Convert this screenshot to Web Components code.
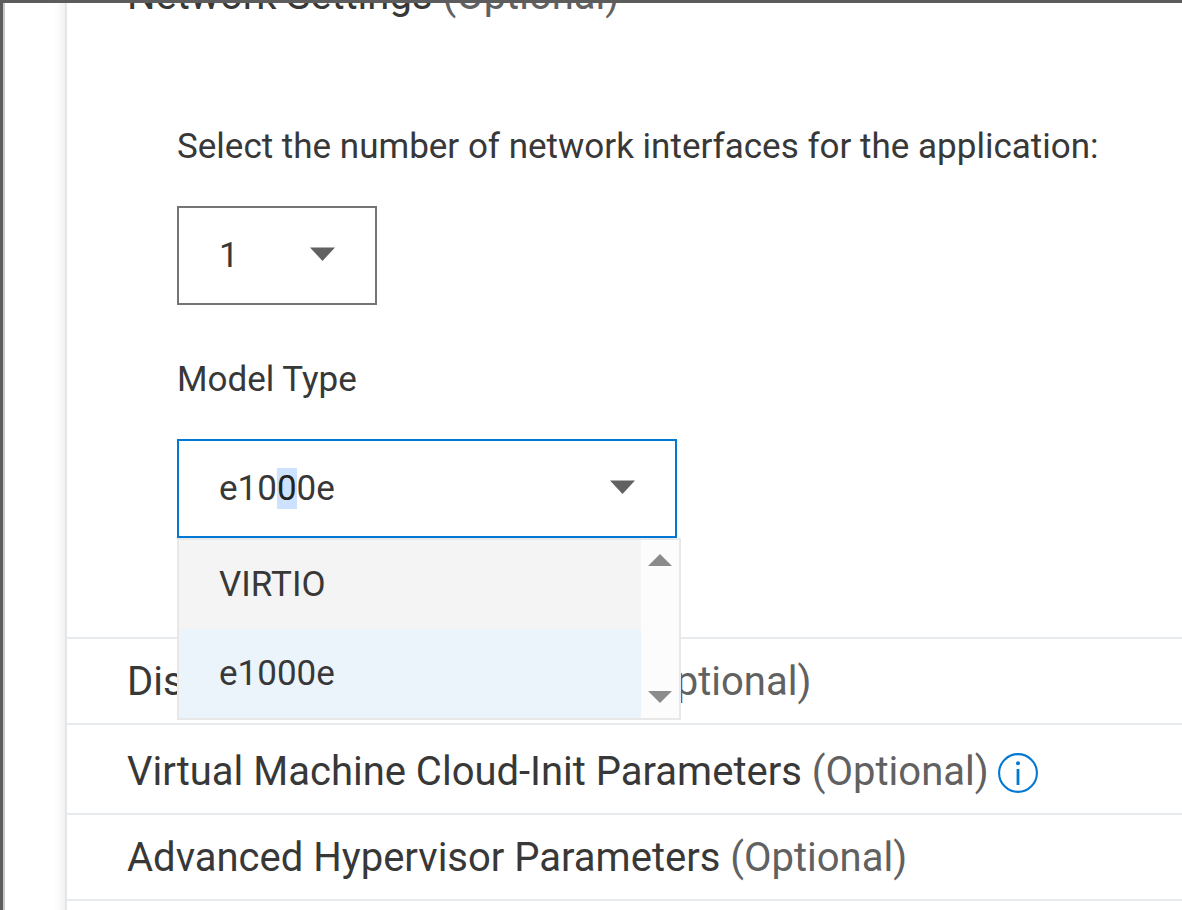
<!DOCTYPE html>
<html lang="en">
<head>
<meta charset="utf-8">
<title>Virtual machine configuration</title>
<style>
html, body { height: 100%; }
body { margin: 0; overflow: hidden; background: #fff; color: #383838; font-family: Roboto, "Liberation Sans", sans-serif; font-size: 35px; line-height: 48px; }
</style>
</head>
<body>
<app-frame>
  <settings-panel>
    <settings-section label="Network Settings" expanded>
      <form-field label="Select the number of network interfaces for the application:">
        <count-select></count-select>
      </form-field>
      <form-field label="Model Type">
        <model-combo></model-combo>
      </form-field>
    </settings-section>
    <settings-section label="Disk and Device Parameters"></settings-section>
    <settings-section label="Virtual Machine Cloud-Init Parameters" info><info-button slot="info"></info-button></settings-section>
    <settings-section label="Advanced Hypervisor Parameters"></settings-section>
  </settings-panel>
</app-frame>
<script>
const CARET = '<svg class="caret" width="25" height="14" viewBox="0 0 25 14" aria-hidden="true"><path d="M0 0.4H25L12.5 14Z" fill="#616161"/></svg>';

class Base extends HTMLElement {
  constructor() {
    super();
    this.attachShadow({ mode: "open" });
  }
  render(css, html) {
    this.shadowRoot.innerHTML = "<style>*{box-sizing:border-box}" + css + "</style>" + html;
  }
}

customElements.define("app-frame", class extends Base {
  connectedCallback() {
    this.render(`
      :host { display: flex; box-sizing: border-box; height: 100vh; overflow: hidden; border-top: 3px solid #5c5c5c; border-left: 3px solid #5c5c5c; }
      main { flex: 1; min-width: 0; border-left: 2px solid #c8c8c8; padding-left: 60px; overflow: hidden; }
    `, "<main><slot></slot></main>");
  }
});

customElements.define("settings-panel", class extends Base {
  connectedCallback() {
    /* The panel is scrolled so that only the foot of its first heading shows. */
    this.render(`
      :host { display: block; margin-top: -50px; min-height: 100vh; padding-bottom: 50px; background: #fff; border-left: 2px solid #e4e7e8; box-shadow: 0 0 12px rgba(0,0,0,.12); }
    `, "<slot></slot>");
  }
});

customElements.define("settings-section", class extends Base {
  connectedCallback() {
    const open = this.hasAttribute("expanded");
    this.render(`
      :host { display: block; border-bottom: 2px solid #e8ebee; }
      header { display: flex; align-items: center; gap: 9px; padding: 19px 20px 17px 60px; }
      :host([info]) header { padding-top: 23px; }
      h2 { margin: 0; font-size: 40px; line-height: 48px; font-weight: 400; white-space: nowrap; }
      .optional { color: #616161; }
      .body { display: flex; flex-direction: column; align-items: flex-start; gap: 50px; padding: 86px 40px 99px 110px; }
    `, `<header><h2>${this.getAttribute("label")} <span class="optional">(Optional)</span></h2><slot name="info"></slot></header>` +
       (open ? '<div class="body"><slot></slot></div>' : ""));
  }
});

customElements.define("info-button", class extends Base {
  connectedCallback() {
    this.render(`
      :host { display: block; margin-top: 2px; }
      button { display: block; padding: 0; border: 0; background: none; color: #0078d4; }
      svg { display: block; }
    `, `<button type="button" aria-label="More information"><svg width="40" height="40" viewBox="0 0 40 40"><circle cx="20" cy="20" r="18.9" fill="none" stroke="currentColor" stroke-width="2.1"/><circle cx="20" cy="10.3" r="2" fill="currentColor"/><path d="M20 16V32" stroke="currentColor" stroke-width="2.8"/></svg></button>`);
  }
});

customElements.define("form-field", class extends Base {
  connectedCallback() {
    const label = this.getAttribute("label");
    this.render(`
      :host { display: flex; flex-direction: column; align-items: flex-start; gap: 35px; max-width: 100%; }
      label { white-space: nowrap; }
      :host(:not(:first-child)) { margin-top: 1px; }
    `, `<label>${label}</label><slot></slot>`);
    this.shadowRoot.querySelector("label").addEventListener("click", () => this.firstElementChild.focus());
  }
});

const BOX = `
  .box { position: relative; height: 99px; }
  .caret { position: absolute; right: 42px; top: 41px; pointer-events: none; }
  select, input { display: block; width: 100%; height: 100%; margin: 0; padding: 0 80px 0 40px; border: 2px solid #757575; border-radius: 0; outline: 0; background: #fff; color: inherit; font: inherit; appearance: none; }
`;

customElements.define("count-select", class extends Base {
  connectedCallback() {
    this.render(`:host { display: block; width: 200px; }` + BOX,
      `<div class="box"><select aria-label="Number of network interfaces"><option>1</option><option>2</option><option>3</option><option>4</option></select>${CARET}</div>`);
  }
  focus() { this.shadowRoot.querySelector("select").focus(); }
});

customElements.define("model-combo", class extends Base {
  connectedCallback() {
    this.render(`
      :host { display: block; position: relative; width: 500px; }
      ${BOX}
      input { border-color: #0078d4; }
      input::selection { background: #cce2ff; color: #222; }
      .menu { position: absolute; z-index: 1; top: 100%; left: 0; width: 504px; display: flex; border: 2px solid #e8e8e8; background: #fcfcfc; }
      ul { flex: 1; margin: 0; padding: 0; list-style: none; }
      li { display: flex; align-items: center; height: 89px; padding: 0 40px; background: #f4f4f4; }
      li[aria-selected=true] { background: #ebf3fb; }
      .bar { width: 38px; display: flex; flex-direction: column; align-items: center; justify-content: space-between; padding: 14px 0 15px; }
    `, `<div class="box"><input type="text" role="combobox" aria-label="Model Type" aria-expanded="true" aria-controls="models" value="e1000e" spellcheck="false" autocomplete="off">${CARET}</div>
      <div class="menu">
        <ul id="models" role="listbox" aria-label="Model Type">
          <li role="option" aria-selected="false">VIRTIO</li>
          <li role="option" aria-selected="true">e1000e</li>
        </ul>
        <div class="bar" aria-hidden="true">
          <svg width="24" height="12" viewBox="0 0 24 12"><path d="M12 0L24 12H0Z" fill="#8b8b8b"/></svg>
          <svg width="24" height="12" viewBox="0 0 24 12"><path d="M0 0H24L12 12Z" fill="#8b8b8b"/></svg>
        </div>
      </div>`);
    const input = this.shadowRoot.querySelector("input");
    input.focus({ preventScroll: true });
    input.setSelectionRange(3, 4);
  }
  focus() { this.shadowRoot.querySelector("input").focus(); }
});
</script>
</body>
</html>
